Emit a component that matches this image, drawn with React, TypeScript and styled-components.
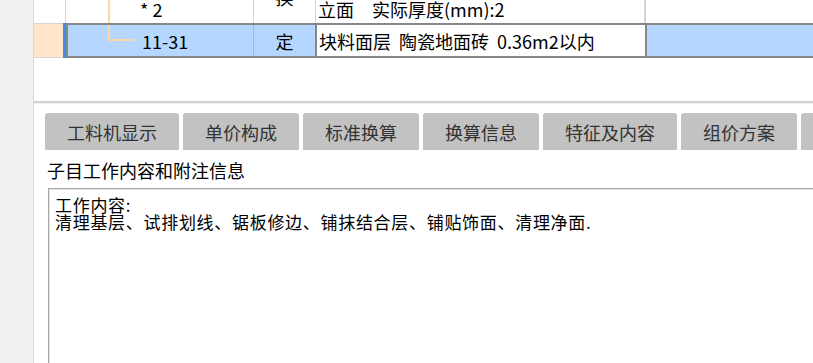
import React from "react";
import styled, { createGlobalStyle } from "styled-components";

const GlobalStyle = createGlobalStyle`
  html, body, #root {
    margin: 0;
    padding: 0;
    height: 100%;
    overflow: hidden;
  }
  body {
    font-family: "Noto Sans CJK SC", "Microsoft YaHei", sans-serif;
    background: #ffffff;
    color: #000;
  }
`;

const Page = styled.div`
  display: flex;
  height: 100%;
`;

const LeftStrip = styled.div`
  width: 33px;
  flex-shrink: 0;
  background: #f0f0f0;
  border-right: 1px solid #dadada;
`;

const Main = styled.div`
  flex: 1;
  display: flex;
  flex-direction: column;
  min-width: 0;
`;

const Row = styled.div<{ h: number }>`
  display: flex;
  height: ${(p) => p.h}px;
  overflow: hidden;
  font-size: 18px;
  line-height: 20px;
`;

const Cell = styled.div<{ w?: number; line?: number; align?: string }>`
  ${(p) => (p.w ? `width: ${p.w}px; flex-shrink: 0;` : "flex: 1;")}
  box-sizing: border-box;
  display: flex;
  align-items: ${(p) => p.align || "center"};
  border-right: ${(p) => (p.line ? `${p.line}px solid #d4d4d4` : "none")};
  white-space: nowrap;
  overflow: hidden;
`;

const TopText = styled.span<{ shift?: number; pad?: number }>`
  display: block;
  margin-top: ${(p) => p.shift ?? 0}px;
  padding-left: ${(p) => p.pad || 0}px;
`;

const CenterText = styled.span<{ shift?: number }>`
  flex: 1;
  text-align: center;
  margin-top: ${(p) => p.shift ?? 0}px;
`;

const TreeStem = styled.span`
  align-self: stretch;
  margin-left: 42px;
  border-left: 2px solid #ffd6a3;
`;

const TreeElbow = styled.span`
  align-self: flex-start;
  margin-left: 40px;
  width: 24px;
  height: 14px;
  border-left: 2px solid #ffd6a3;
  border-bottom: 2px solid #ffd6a3;
  flex-shrink: 0;
`;

const Code = styled.span`
  margin-left: 8px;
`;

const IndexCell = styled.div`
  width: 29px;
  flex-shrink: 0;
  background: #ffe6c9;
  border-top: 1px solid #d6d6d6;
  border-bottom: 1px solid #d6d6d6;
`;

const CurrentMark = styled.div`
  width: 3px;
  flex-shrink: 0;
  background: #3b8de8;
`;

const Selection = styled.div`
  flex: 1;
  display: flex;
  box-sizing: border-box;
  background: #b5d6fe;
  border: 2px solid #878787;
  border-right: none;
`;

const SelCell = styled.div<{ w?: number }>`
  ${(p) => (p.w ? `width: ${p.w}px; flex-shrink: 0;` : "flex: 1;")}
  box-sizing: border-box;
  display: flex;
  align-items: center;
  white-space: nowrap;
  overflow: hidden;
`;

const CodeSel = styled(SelCell)`
  border-right: 1px solid #a9b8c9;
`;

const EditCell = styled(SelCell)`
  background: #ffffff;
  border-left: 2px solid #878787;
  border-right: 2px solid #878787;
  padding-left: 2px;
  word-spacing: 4px;
`;

const Blank = styled.div`
  height: 43px;
  flex-shrink: 0;
`;

const Splitter = styled.div`
  height: 3px;
  flex-shrink: 0;
  border-top: 2px solid #d2d2d2;
  background: #efefef;
  box-sizing: border-box;
`;

const TabBar = styled.div`
  display: flex;
  gap: 4px;
  padding: 9px 0 0 11px;
  flex-shrink: 0;
  overflow: hidden;
`;

const Tab = styled.div`
  height: 37px;
  padding: 0 22px;
  display: flex;
  align-items: center;
  background: #c2c2c2;
  border-radius: 3px 3px 0 0;
  color: #333;
  font-size: 18px;
  white-space: nowrap;
  flex-shrink: 0;
`;

const Label = styled.div`
  height: 38px;
  flex-shrink: 0;
  display: flex;
  align-items: center;
  padding: 2px 0 0 13px;
  box-sizing: border-box;
  font-size: 18px;
`;

const NoteBox = styled.div`
  flex: 1;
  margin-left: 14px;
  border-top: 1px solid #a8a8a8;
  border-left: 1px solid #a8a8a8;
  box-shadow: inset 1px 1px 0 #e2e2e2;
  padding: 7px 0 0 6px;
  font-size: 17px;
  line-height: 17px;
  letter-spacing: 0.7px;
  white-space: nowrap;
  overflow: hidden;
`;

const tabs = ["工料机显示", "单价构成", "标准换算", "换算信息", "特征及内容", "组价方案", "说明信息"];

export default function App() {
  return (
    <Page>
      <GlobalStyle />
      <LeftStrip />
      <Main>
        <Row h={23}>
          <Cell w={32} line={1} />
          <Cell w={188} line={1} align="flex-start">
            <TreeStem />
            <TopText pad={30} shift={-1}>* 2</TopText>
          </Cell>
          <Cell w={62} line={1} align="flex-start">
            <CenterText shift={-13}>换</CenterText>
          </Cell>
          <Cell w={330} line={2} align="flex-start">
            <TopText pad={2} shift={-1}>立面　实际厚度(mm):2</TopText>
          </Cell>
          <Cell />
        </Row>
        <Row h={35}>
          <IndexCell />
          <CurrentMark />
          <Selection>
            <CodeSel w={186}>
              <TreeElbow />
              <Code>11-31</Code>
            </CodeSel>
            <SelCell w={61}>
              <CenterText>定</CenterText>
            </SelCell>
            <EditCell w={332}>块料面层 陶瓷地面砖 0.36m2以内</EditCell>
            <SelCell />
          </Selection>
        </Row>
        <Blank />
        <Splitter />
        <TabBar>
          {tabs.map((t) => (
            <Tab key={t}>{t}</Tab>
          ))}
        </TabBar>
        <Label>子目工作内容和附注信息</Label>
        <NoteBox>
          工作内容:
          <br />
          清理基层、试排划线、锯板修边、铺抹结合层、铺贴饰面、清理净面.
        </NoteBox>
      </Main>
    </Page>
  );
}
